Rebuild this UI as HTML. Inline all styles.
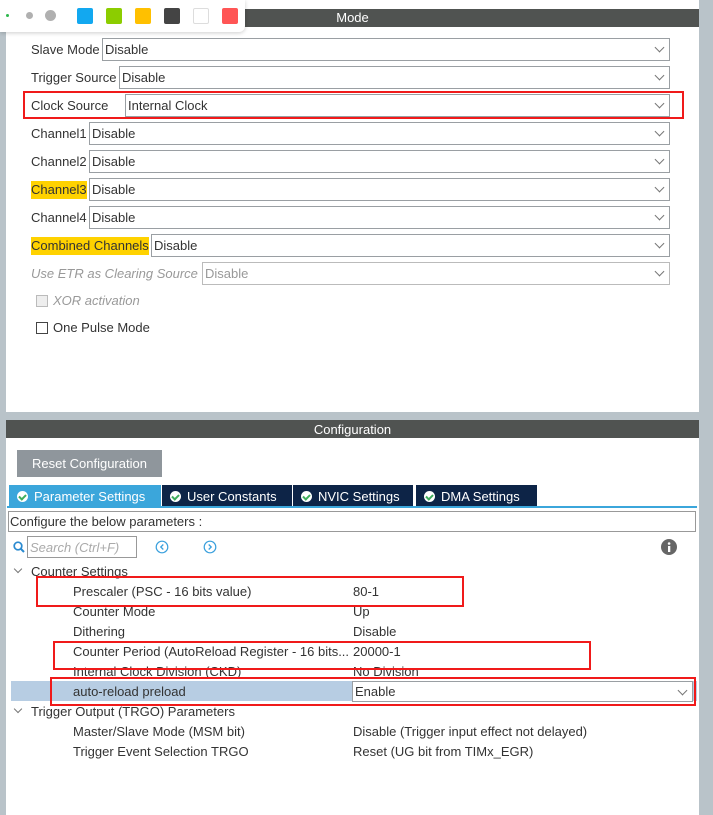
<!DOCTYPE html>
<html><head><meta charset="utf-8"><style>
*{margin:0;padding:0;box-sizing:border-box}
body{width:713px;height:815px;background:#b9c3c9;position:relative;overflow:hidden;font-family:"Liberation Sans",sans-serif;font-size:13px;color:#333}
.a{position:absolute}
.hdr{background:#505351;color:#fff;text-align:center;font-size:13px;line-height:18px}
.lbl{position:absolute;left:31px;line-height:18px;white-space:nowrap;margin-top:1px}
.y{background:#ffd200}
.dd{position:absolute;height:23px;border:1px solid #9a9fa3;background:#fff;line-height:21px;padding-left:2px;right:43px}
.dd:after{content:"";position:absolute;right:6px;top:5px;width:6px;height:6px;border-right:1px solid #777;border-bottom:1px solid #777;transform:rotate(45deg)}
.red{position:absolute;border:2px solid #f01a1a}
.row{position:absolute;line-height:20px;white-space:nowrap;margin-top:1px}
.tab{position:absolute;top:485px;height:22px;background:#0d2447;color:#fff;line-height:23px;font-size:13px;padding-left:8px}
.ck{display:inline-block;width:11px;height:11px;border-radius:50%;background:#fff;position:relative;vertical-align:-1px;margin-right:6px}
.ck:after{content:"";position:absolute;left:3px;top:2px;width:3px;height:5px;border-right:2px solid #3fae5c;border-bottom:2px solid #3fae5c;transform:rotate(45deg)}
.chev{position:absolute;left:15px;width:6px;height:6px;border-right:1px solid #777;border-bottom:1px solid #777;transform:rotate(45deg)}
</style></head><body>
<div class="a" style="left:6px;top:0;width:693px;height:412px;background:#fff"></div>
<div class="a hdr" style="left:6px;top:9px;width:693px;height:18px">Mode</div>

<div class="lbl" style="top:40px">Slave Mode</div><div class="dd" style="left:102px;top:38px">Disable</div>
<div class="lbl" style="top:68px">Trigger Source</div><div class="dd" style="left:119px;top:66px">Disable</div>
<div class="lbl" style="top:96px">Clock Source</div><div class="dd" style="left:125px;top:94px">Internal Clock</div>
<div class="lbl" style="top:124px">Channel1</div><div class="dd" style="left:89px;top:122px">Disable</div>
<div class="lbl" style="top:152px">Channel2</div><div class="dd" style="left:89px;top:150px">Disable</div>
<div class="lbl y" style="top:180px">Channel3</div><div class="dd" style="left:89px;top:178px">Disable</div>
<div class="lbl" style="top:208px">Channel4</div><div class="dd" style="left:89px;top:206px">Disable</div>
<div class="lbl y" style="top:236px">Combined Channels</div><div class="dd" style="left:151px;top:234px">Disable</div>
<div class="lbl" style="top:264px;color:#999;font-style:italic">Use ETR as Clearing Source</div><div class="dd" style="left:202px;top:262px;color:#999;border-color:#bbb">Disable</div>
<div class="a" style="left:36px;top:295px;width:12px;height:12px;border:1px solid #bbb;background:#eee"></div>
<div class="lbl" style="left:53px;top:291px;color:#999;font-style:italic">XOR activation</div>
<div class="a" style="left:36px;top:322px;width:12px;height:12px;border:1px solid #444;background:#fff"></div>
<div class="lbl" style="left:53px;top:318px">One Pulse Mode</div>
<div class="red" style="left:23px;top:91px;width:661px;height:28px"></div>

<div class="a" style="left:0;top:0;width:245px;height:32px;background:#fff;border-radius:0 0 6px 0;box-shadow:0 1px 4px rgba(0,0,0,.2)"></div>
<div class="a" style="left:6px;top:14px;width:3px;height:3px;border-radius:50%;background:#2db84d"></div>
<div class="a" style="left:26px;top:12px;width:7px;height:7px;border-radius:50%;background:#b0b0b0"></div>
<div class="a" style="left:45px;top:10px;width:11px;height:11px;border-radius:50%;background:#b0b0b0"></div>
<div class="a" style="left:77px;top:8px;width:16px;height:16px;background:#12a8f0;border-radius:2px"></div>
<div class="a" style="left:106px;top:8px;width:16px;height:16px;background:#8ccd00;border-radius:2px"></div>
<div class="a" style="left:135px;top:8px;width:16px;height:16px;background:#ffc000;border-radius:2px"></div>
<div class="a" style="left:164px;top:8px;width:16px;height:16px;background:#444;border-radius:2px"></div>
<div class="a" style="left:193px;top:8px;width:16px;height:16px;background:#fff;border:1px solid #ddd;border-radius:2px"></div>
<div class="a" style="left:222px;top:8px;width:16px;height:16px;background:#f55;border-radius:2px"></div>

<div class="a" style="left:6px;top:420px;width:693px;height:395px;background:#fff"></div>
<div class="a hdr" style="left:6px;top:420px;width:693px;height:18px;line-height:19px">Configuration</div>
<div class="a" style="left:17px;top:450px;width:145px;height:27px;background:#8f969c;color:#fff;line-height:27px;text-align:center">Reset Configuration</div>
<div class="tab" style="left:9px;width:152px;background:#3ba6db"><span class="ck"></span>Parameter Settings</div>
<div class="tab" style="left:162px;width:130px"><span class="ck"></span>User Constants</div>
<div class="tab" style="left:293px;width:120px"><span class="ck"></span>NVIC Settings</div>
<div class="tab" style="left:416px;width:121px"><span class="ck"></span>DMA Settings</div>
<div class="a" style="left:7px;top:506px;width:690px;height:2px;background:#3ba6db"></div>
<div class="a" style="left:8px;top:511px;width:688px;height:21px;border:1px solid #999;line-height:20px;padding-left:1px">Configure the below parameters :</div>
<svg class="a" style="left:13px;top:541px" width="12" height="12"><circle cx="5" cy="5" r="3.8" fill="none" stroke="#2a8ad0" stroke-width="1.7"/><line x1="8" y1="8" x2="11" y2="11" stroke="#2a8ad0" stroke-width="2"/></svg>
<div class="a" style="left:27px;top:536px;width:110px;height:22px;border:1px solid #999;color:#aaa;font-style:italic;line-height:21px;padding-left:2px">Search (Ctrl+F)</div>
<svg class="a" style="left:155px;top:540px" width="14" height="14"><circle cx="7" cy="7" r="5.8" fill="none" stroke="#3aa0dd" stroke-width="1.2"/><path d="M8.3 4.5L5.8 7l2.5 2.5" fill="none" stroke="#3aa0dd" stroke-width="1.3"/></svg>
<svg class="a" style="left:203px;top:540px" width="14" height="14"><circle cx="7" cy="7" r="5.8" fill="none" stroke="#3aa0dd" stroke-width="1.2"/><path d="M5.7 4.5L8.2 7l-2.5 2.5" fill="none" stroke="#3aa0dd" stroke-width="1.3"/></svg>
<svg class="a" style="left:661px;top:539px" width="16" height="16"><circle cx="8" cy="8" r="8" fill="#666"/><rect x="7" y="7" width="2.3" height="6" fill="#fff"/><circle cx="8.1" cy="4.5" r="1.3" fill="#fff"/></svg>

<div class="a" style="left:11px;top:681px;width:686px;height:20px;background:#b7cde3"></div>
<div class="chev" style="top:566px"></div>
<div class="row" style="left:31px;top:561px">Counter Settings</div>
<div class="row" style="left:73px;top:581px">Prescaler (PSC - 16 bits value)</div><div class="row" style="left:353px;top:581px">80-1</div>
<div class="row" style="left:73px;top:601px">Counter Mode</div><div class="row" style="left:353px;top:601px">Up</div>
<div class="row" style="left:73px;top:621px">Dithering</div><div class="row" style="left:353px;top:621px">Disable</div>
<div class="row" style="left:73px;top:641px">Counter Period (AutoReload Register - 16 bits...</div><div class="row" style="left:353px;top:641px">20000-1</div>
<div class="row" style="left:73px;top:661px">Internal Clock Division (CKD)</div><div class="row" style="left:353px;top:661px">No Division</div>
<div class="row" style="left:73px;top:681px">auto-reload preload</div>
<div class="dd" style="left:352px;top:681px;right:20px;height:21px;line-height:20px">Enable</div>
<div class="chev" style="top:706px"></div>
<div class="row" style="left:31px;top:701px">Trigger Output (TRGO) Parameters</div>
<div class="row" style="left:73px;top:721px">Master/Slave Mode (MSM bit)</div><div class="row" style="left:353px;top:721px">Disable (Trigger input effect not delayed)</div>
<div class="row" style="left:73px;top:741px">Trigger Event Selection TRGO</div><div class="row" style="left:353px;top:741px">Reset (UG bit from TIMx_EGR)</div>

<div class="red" style="left:36px;top:576px;width:428px;height:31px"></div>
<div class="red" style="left:53px;top:641px;width:538px;height:29px"></div>
<div class="red" style="left:50px;top:677px;width:646px;height:29px"></div>
</body></html>
